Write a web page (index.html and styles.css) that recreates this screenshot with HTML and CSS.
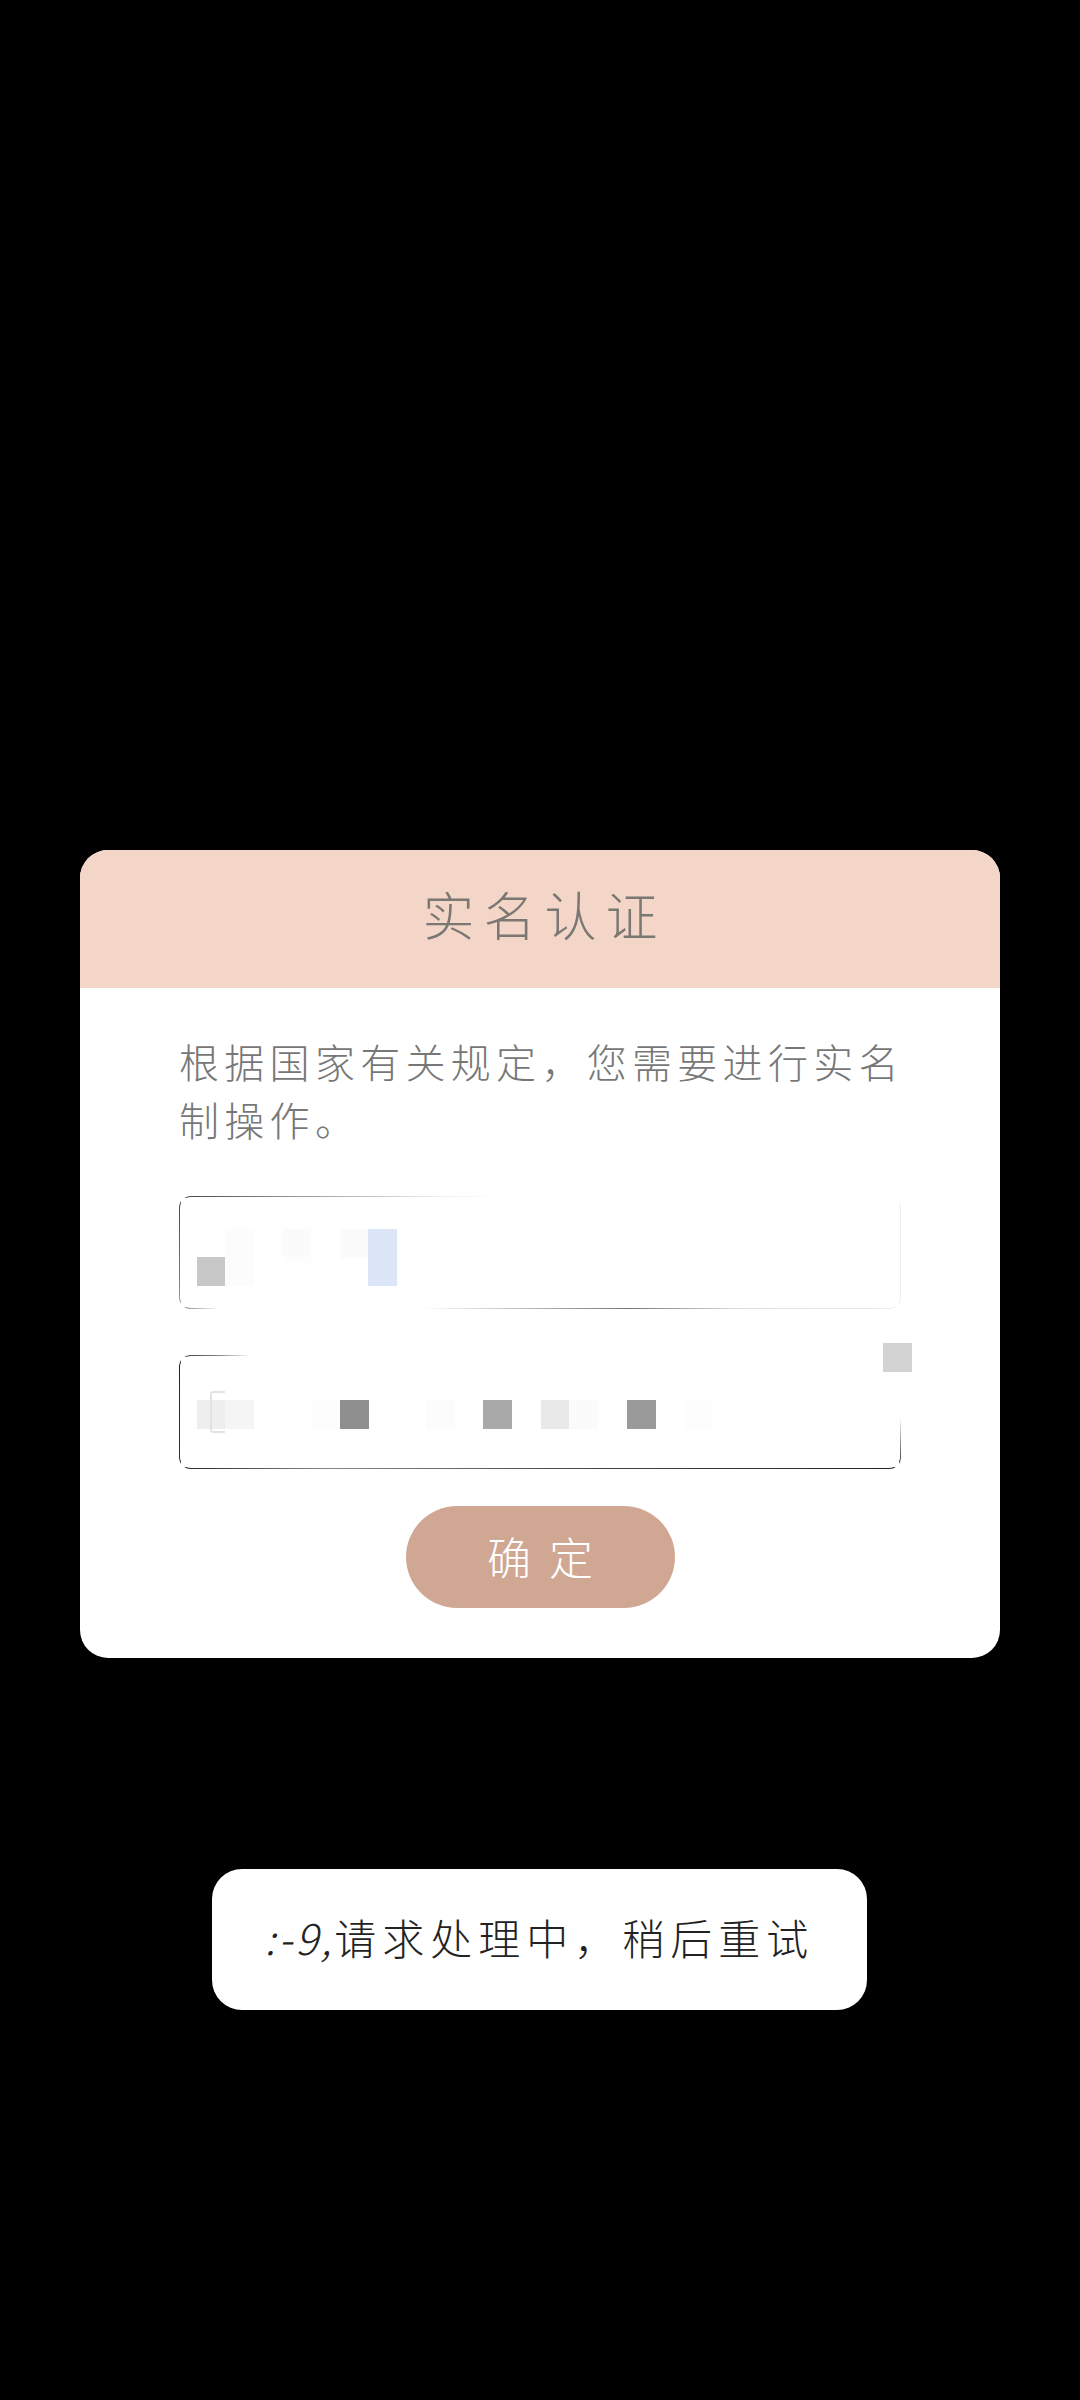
FILE: index.html
```html
<!DOCTYPE html>
<html lang="zh-CN">
<head>
<meta charset="utf-8">
<title>实名认证</title>
<link rel="stylesheet" href="styles.css">
</head>
<body>
<main class="screen">
  <section class="card">
    <h1 class="card-title">实名认证</h1>
    <div class="card-body">
      <p class="notice">根据国家有关规定，您需要进行实名制操作。</p>
      <div class="field field-name">
        <i class="px n1"></i><i class="px n2"></i><i class="px n3"></i><i class="px n4"></i><i class="px n5"></i><i class="px n6"></i>
      </div>
      <div class="field field-id">
        <i class="caret"></i>
        <i class="px d1"></i><i class="px d2"></i><i class="px d3"></i><i class="px d4"></i><i class="px d5"></i><i class="px d6"></i><i class="px d7"></i><i class="px d8"></i><i class="px d9"></i><i class="px d10"></i>
      </div>
      <button class="confirm" type="button">确定</button>
    </div>
  </section>
  <div class="toast"><span class="toast-code">:-9,</span>请求处理中，稍后重试</div>
</main>
</body>
</html>
```

FILE: styles.css
```css
* { box-sizing: border-box; }
html, body { margin: 0; padding: 0; background: #000; }
body { font-family: "Noto Sans CJK SC", "Noto Sans", sans-serif; font-weight: 300; }
.screen { width: 1080px; height: 2400px; padding-top: 850px; display: flex; flex-direction: column; align-items: center; overflow: hidden; }

.card { width: 920px; height: 808px; background: #fff; border-radius: 28px; overflow: hidden; }
.card-title { margin: 0; height: 138px; background: #f3d6c8; color: #7b7874; font-size: 52px; font-weight: 300; letter-spacing: 9px; text-indent: 9px; line-height: 128px; text-align: center; }
.card-body { padding: 46px 99px 0; display: flex; flex-direction: column; }
.notice { margin: -2px -8px 48px 0; color: #777; font-size: 40px; line-height: 58px; letter-spacing: 5.3px; }

.field { position: relative; width: 722px; height: 113px; border: 1.5px solid transparent; border-radius: 12px; }
.field-name {
  background:
    linear-gradient(#fff, #fff) padding-box,
    linear-gradient(90deg, #444 0, #999 120px, #eee 260px, #fff 320px, #fff 100%) top left / 100% 2px no-repeat border-box,
    linear-gradient(90deg, #777 0, #fff 40px, #fff 240px, #777 450px, #ddd 560px, #eee 100%) bottom left / 100% 2px no-repeat border-box,
    linear-gradient(180deg, #444 0, #777 70%, #aaa 100%) left top / 2px 100% no-repeat border-box,
    linear-gradient(#f0f0f0, #f0f0f0) right top / 2px 100% no-repeat border-box;
}
.field-id {
  height: 114px;
  margin-top: 46px;
  background:
    linear-gradient(#fff, #fff) padding-box,
    linear-gradient(90deg, #333 0, #888 40px, #fff 72px, #fff 100%) top left / 100% 2px no-repeat border-box,
    linear-gradient(90deg, #222 0, #777 120px, #888 150px, #444 420px, #222 100%) bottom left / 100% 2px no-repeat border-box,
    linear-gradient(180deg, #222 0, #333 100%) left top / 2px 100% no-repeat border-box,
    linear-gradient(180deg, #fff 0, #fff 55%, #222 100%) right top / 2px 100% no-repeat border-box;
}

.px { position: absolute; width: 28.7px; height: 29px; }
.n1 { left: 17px; top: 60px; background: #c8c8c8; }
.n2 { left: 45px; top: 32px; height: 57px; background: #fcfcfc; }
.n3 { left: 102px; top: 32px; background: #fbfbfb; }
.n4 { left: 102px; top: 60px; background: #fefefe; }
.n5 { left: 160px; top: 32px; background: #fbfbfb; }
.n6 { left: 188px; top: 32px; height: 57px; background: #dde5f8; }

.d1 { left: 17px; top: 44px; background: #eee; }
.d2 { left: 45px; top: 44px; background: #f5f5f5; }
.d3 { left: 160px; top: 44px; background: #8f8f8f; }
.d4 { left: 131px; top: 44px; background: #fdfdfd; }
.d5 { left: 246px; top: 44px; background: #fcfcfc; }
.d6 { left: 303px; top: 44px; background: #a9a9a9; }
.d7 { left: 361px; top: 44px; background: #e9e9e9; }
.d8 { left: 389px; top: 44px; background: #fbfbfb; }
.d9 { left: 447px; top: 44px; background: #9a9a9a; }
.d10 { left: 504px; top: 44px; background: #fdfdfd; }
.d10::after { content: ""; position: absolute; left: 199px; top: -57px; width: 29px; height: 29px; background: #d3d3d3; }
.caret { position: absolute; z-index: 1; left: 30px; top: 35px; width: 15px; height: 42px; border: 2px solid #e2e2e2; border-right: 0; border-radius: 3px 0 0 3px; }

.confirm { align-self: center; width: 269px; height: 102px; margin-top: 37px; border: 0; border-radius: 51px; background: #d0a792; color: #fff; font-family: inherit; font-size: 44px; font-weight: 300; letter-spacing: 18px; text-indent: 18px; padding: 0 0 3px; }

.toast { width: 655px; height: 141px; margin-top: 211px; margin-left: -1px; background: #fff; border-radius: 30px; color: #222; font-size: 42px; letter-spacing: 6px; line-height: 136px; text-align: center; white-space: nowrap; }
.toast-code { font-style: italic; letter-spacing: 3px; }
```
